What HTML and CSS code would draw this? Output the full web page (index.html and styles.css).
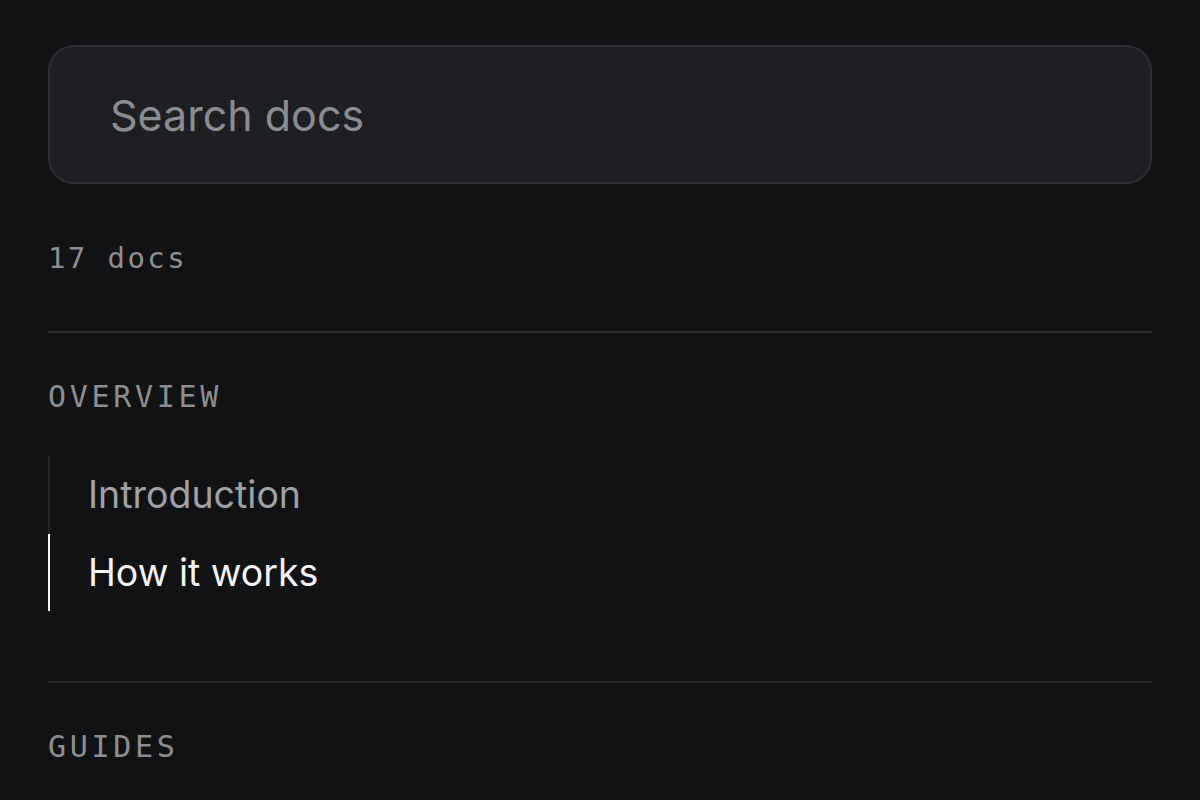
FILE: index.html
```html
<!DOCTYPE html>
<html lang="en">
<head>
<meta charset="utf-8">
<title>Docs sidebar</title>
<link rel="stylesheet" href="styles.css">
</head>
<body>
<aside class="sidebar">
  <div class="search">
    <input class="search-input" type="text" placeholder="Search docs">
  </div>
  <div class="count">17 docs</div>
  <hr class="divider">
  <section class="group">
    <h2 class="group-title">OVERVIEW</h2>
    <nav class="nav">
      <a class="nav-item" href="#">Introduction</a>
      <a class="nav-item active" href="#">How it works</a>
    </nav>
  </section>
  <hr class="divider">
  <section class="group">
    <h2 class="group-title">GUIDES</h2>
  </section>
</aside>
</body>
</html>
```
FILE: styles.css
```css
html, body {
  margin: 0;
  padding: 0;
  background: #111214;
  height: 100%;
  overflow: hidden;
}
body {
  font-family: Inter, "Liberation Sans", sans-serif;
}
.sidebar {
  padding: 45px 48px 0 48px;
  display: flex;
  flex-direction: column;
}
.search {
  height: 139px;
  box-sizing: border-box;
  border: 2px solid #2e2f33;
  border-radius: 26px;
  background: #1e1f22;
  display: flex;
  align-items: center;
  padding-left: 60px;
}
.search-input {
  background: transparent;
  border: none;
  outline: none;
  width: 100%;
  font-family: Inter, "Liberation Sans", sans-serif;
  font-size: 43px;
  color: #e8e8ea;
  padding: 0;
}
.search-input::placeholder {
  color: #8b8c91;
}
.count {
  margin-top: 56px;
  font-family: "DejaVu Sans Mono", "Liberation Mono", monospace;
  font-size: 29px;
  line-height: 36px;
  letter-spacing: 2.4px;
  color: #8d8e92;
}
.divider {
  margin: 55px 0 0 0;
  border: none;
  height: 2px;
  background: #2a2b2e;
}
.group-title {
  margin: 47px 0 0 0;
  font-family: "DejaVu Sans Mono", "Liberation Mono", monospace;
  font-weight: 400;
  font-size: 30px;
  line-height: 34px;
  letter-spacing: 3.7px;
  color: #8d8e92;
}
.group-title.last {
  margin-top: 45px;
}
.nav {
  margin-top: 42px;
  display: flex;
  flex-direction: column;
  border-left: 2px solid #26272a;
  margin-bottom: 15px;
}
.nav-item {
  display: flex;
  align-items: center;
  height: 77.5px;
  padding-left: 38px;
  margin-left: -2px;
  border-left: 2px solid transparent;
  font-size: 37.5px;
  color: #a0a1a5;
  text-decoration: none;
}
.nav-item.active {
  border-left-color: #f4f4f5;
  color: #f4f4f5;
}
```
